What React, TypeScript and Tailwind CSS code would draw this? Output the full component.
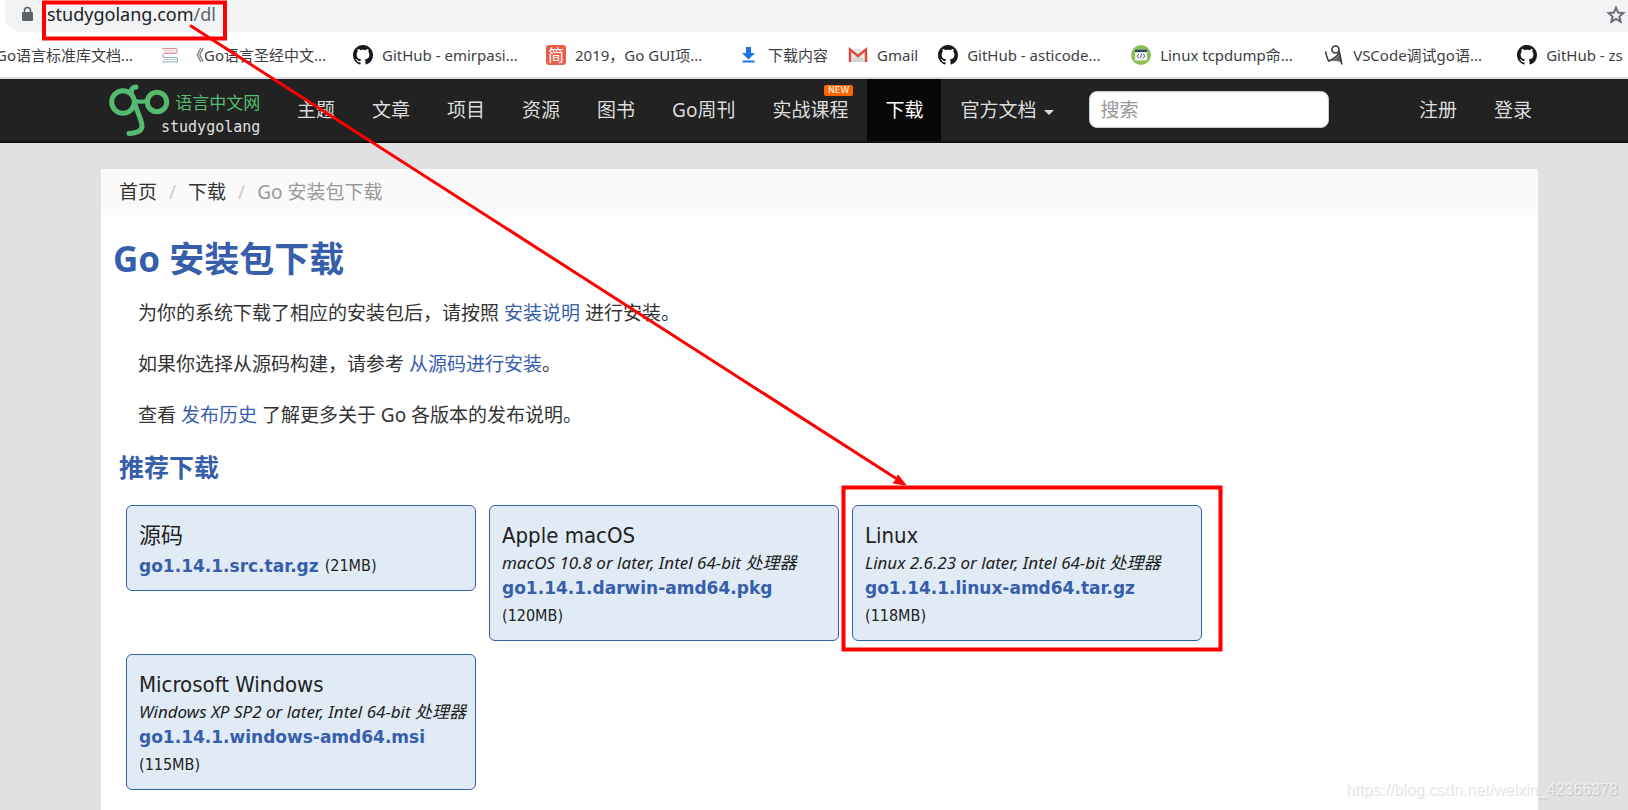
import type { ReactNode } from 'react';

interface Bookmark {
  title: string;
  icon: ReactNode;
  short?: boolean;
}

interface Download {
  platform: string;
  requirements?: string;
  file: string;
  size: string;
}

const GithubIcon = () => (
  <svg viewBox="0 0 16 16" className="size-5" fill="#191717">
    <path d="M8 0C3.58 0 0 3.58 0 8c0 3.54 2.29 6.53 5.47 7.59.4.07.55-.17.55-.38 0-.19-.01-.82-.01-1.49-2.01.37-2.53-.49-2.69-.94-.09-.23-.48-.94-.82-1.13-.28-.15-.68-.52-.01-.53.63-.01 1.08.58 1.23.82.72 1.21 1.87.87 2.33.66.07-.52.28-.87.51-1.07-1.78-.2-3.64-.89-3.64-3.95 0-.87.31-1.59.82-2.15-.08-.2-.36-1.02.08-2.12 0 0 .67-.21 2.2.82.64-.18 1.32-.27 2-.27.68 0 1.36.09 2 .27 1.53-1.04 2.2-.82 2.2-.82.44 1.1.16 1.92.08 2.12.51.56.82 1.27.82 2.15 0 3.07-1.87 3.75-3.65 3.95.29.25.54.73.54 1.48 0 1.07-.01 1.93-.01 2.2 0 .21.15.46.55.38A8.013 8.013 0 0016 8c0-4.42-3.58-8-8-8z" />
  </svg>
);

const BookIcon = () => (
  <svg viewBox="0 0 20 20" className="size-5" fill="none" strokeWidth="1.2">
    <path d="M2 3.500h14c1.500 0 1.500 4.500 0 4.500H4.500" stroke="#e88a8f" />
    <path d="M3 5.700h12" stroke="#f3c8ca" />
    <path d="M16 8.500H5c-3 0-3 4 0 4h11" stroke="#d8a0a8" />
    <path d="M3 14.600h13" stroke="#b9cfd2" />
    <path d="M5 12.500h11c2 0 2 4.500 0 4.500H2" stroke="#8fb3b8" />
  </svg>
);

const JianshuIcon = () => (
  <span className="flex size-5 items-center justify-center rounded-[3px] bg-[#e8604c] text-base leading-5 text-white">
    简
  </span>
);

const DownloadIcon = () => (
  <svg viewBox="0 0 20 20" className="size-5" fill="#1a73e8">
    <path d="M7 2h5v6h4l-6.500 6.500L3 8h4zM3.500 15.500h12v2h-12z" />
  </svg>
);

const GmailIcon = () => (
  <svg viewBox="0 0 20 20" className="size-5">
    <path d="M2 4h16v13H2z" fill="#e9e9e9" />
    <path d="M2 17l6-6 2 1.500 2-1.500 6 6z" fill="#d5d5d5" />
    <path d="M2 17V4.500l8 6.500 8-6.500V17" fill="none" stroke="#d9493d" strokeWidth="2.400" />
  </svg>
);

const CodeIcon = () => (
  <svg viewBox="0 0 20 20" className="size-5">
    <circle cx="10" cy="10" r="10" fill="#8cc152" />
    <path d="M4 4.500h12v11H4z" fill="#eef1f3" />
    <path d="M4 4.500h12v2.500H4z" fill="#2f4a63" />
    <path d="M8 9l-2 2 2 2M12 9l2 2-2 2M10.700 8.700l-1.400 4.600" fill="none" stroke="#5d7387" strokeWidth="1" />
  </svg>
);

const FigureIcon = () => (
  <svg viewBox="0 0 20 20" className="size-5" fill="none" stroke="#333">
    <circle cx="11.500" cy="4.500" r="3.500" strokeWidth="1.600" />
    <path d="M1.500 6.500c1 5 2 7.500 3 9.500 4-1 8-4 11-8.500 1 4 1.500 7 2.500 12" strokeWidth="1.400" />
    <path d="M4.500 16.500c5-.5 9-1.500 13 1.500l-2-9c-2 3-5 6-8 7z" fill="#333" stroke="none" opacity=".75" />
  </svg>
);

const bookmarks: Bookmark[] = [
  { title: 'Go语言标准库文档...', icon: <BookIcon /> },
  { title: '《Go语言圣经中文...', icon: <BookIcon /> },
  { title: 'GitHub - emirpasi...', icon: <GithubIcon /> },
  { title: '2019，Go GUI项...', icon: <JianshuIcon /> },
  { title: '下载内容', icon: <DownloadIcon />, short: true },
  { title: 'Gmail', icon: <GmailIcon />, short: true },
  { title: 'GitHub - asticode...', icon: <GithubIcon /> },
  { title: 'Linux tcpdump命...', icon: <CodeIcon /> },
  { title: 'VSCode调试go语...', icon: <FigureIcon /> },
  { title: 'GitHub - zs', icon: <GithubIcon />, short: true },
];

const navItems = ['主题', '文章', '项目', '资源', '图书', 'Go周刊', '实战课程', '下载', '官方文档'];

const downloads: Download[] = [
  { platform: '源码', file: 'go1.14.1.src.tar.gz', size: '21MB' },
  {
    platform: 'Apple macOS',
    requirements: 'macOS 10.8 or later, Intel 64-bit 处理器',
    file: 'go1.14.1.darwin-amd64.pkg',
    size: '120MB',
  },
  {
    platform: 'Linux',
    requirements: 'Linux 2.6.23 or later, Intel 64-bit 处理器',
    file: 'go1.14.1.linux-amd64.tar.gz',
    size: '118MB',
  },
  {
    platform: 'Microsoft Windows',
    requirements: 'Windows XP SP2 or later, Intel 64-bit 处理器',
    file: 'go1.14.1.windows-amd64.msi',
    size: '115MB',
  },
];

function BrowserBar() {
  return (
    <div className="bg-white">
      <div className="ml-[5px] flex h-8 items-center justify-between rounded-bl-2xl bg-[#f1f3f4] pr-px pl-4">
        <div className="flex items-center gap-[13px] pb-1">
          <svg viewBox="0 0 13 16" className="h-4 w-[13px]">
            <rect x="1" y="6" width="11" height="9" rx="1" fill="#5f6368" />
            <path d="M3.500 7V4.500a3 3 0 0 1 6 0V7" fill="none" stroke="#5f6368" strokeWidth="1.600" />
          </svg>
          <span className="text-lg leading-7 text-[#5f6368]">
            <span className="text-[#202124]">studygolang.com</span>/dl
          </span>
        </div>
        <button type="button" aria-label="收藏" className="pb-[2px]">
          <svg viewBox="0 0 24 24" className="size-[22px]" fill="#5f6368" stroke="#5f6368" strokeWidth=".5">
            <path d="M22 9.240l-7.190-.62L12 2 9.190 8.630 2 9.240l5.460 4.730L5.820 21 12 17.270 18.180 21l-1.630-7.030L22 9.240zM12 15.400l-3.760 2.270 1-4.280-3.320-2.880 4.380-.38L12 6.100l1.710 4.040 4.380.38-3.320 2.880 1 4.280L12 15.400z" />
          </svg>
        </button>
      </div>
      <div className="h-[47px] overflow-hidden border-b-2 border-[#dcdce0]">
        <div className="-ml-[33px] flex h-[46px] items-center gap-5">
          {bookmarks.map((item) => (
            <a key={item.title} href="#" className="flex shrink-0 items-center gap-[9px] text-[15px] leading-5 text-[#3c4043]">
              {item.icon}
              <span className={item.short ? 'whitespace-nowrap' : 'w-36 whitespace-nowrap'}>{item.title}</span>
            </a>
          ))}
        </div>
      </div>
    </div>
  );
}

function Logo() {
  return (
    <a href="#" className="flex w-[152px] shrink-0 items-start">
      <svg viewBox="0 0 62 54" className="h-[54px] w-[62px] shrink-0" fill="none" stroke="#55bb71" strokeWidth="5" strokeLinecap="round">
        <circle cx="14" cy="19" r="11.300" />
        <circle cx="48" cy="19" r="9.700" />
        <path d="M22.500 9c-.5-3 1-4.500 4.500-5" />
        <path d="M26 18c4 1 8 1 12 0" strokeWidth="4" />
        <path d="M25.500 19c2 9 7.500 18 7.500 24 0 5-5 7-13 7.500" />
      </svg>
      <span className="-ml-[10px] flex flex-col items-end pt-2">
        <span className="text-[17px] leading-6 whitespace-nowrap text-[#55bb71]">语言中文网</span>
        <span className="font-['DejaVu_Sans_Mono',monospace] text-[15px] leading-6 text-[#e0e0e0]">studygolang</span>
      </span>
    </a>
  );
}

function Navbar() {
  return (
    <header className="flex h-16 items-start border-b-2 border-[#101010] bg-[#222] pr-[90px] pl-[109px] text-[19px] text-[#ddd]">
      <div className="pt-1">
        <Logo />
      </div>
      <nav className="ml-[18px] flex gap-px">
        {navItems.map((item) => (
          <a
            key={item}
            href="#"
            className={
              item === '下载'
                ? 'flex h-[62px] items-center bg-[#080808] px-[18px] whitespace-nowrap text-white'
                : 'relative flex h-[62px] items-center px-[18px] whitespace-nowrap'
            }
          >
            {item}
            {item === '实战课程' && (
              <span className="absolute top-[6px] right-[13px] h-[11px] rounded-[2px] bg-[#f60] px-1 font-['DejaVu_Sans',sans-serif] text-[9px] leading-[11px] text-white">
                NEW
              </span>
            )}
            {item === '官方文档' && (
              <span className="mt-1 ml-2 border-x-[5px] border-t-[5px] border-x-transparent border-t-[#ddd]" />
            )}
          </a>
        ))}
      </nav>
      <form className="ml-[17px] pt-3">
        <input
          type="search"
          aria-label="搜索"
          placeholder="搜索"
          className="h-[37px] w-60 rounded-lg border border-[#ccc] bg-white px-[10px] text-[#333] inset-shadow-xs placeholder:text-[#999]"
        />
      </form>
      <div className="ml-auto flex h-[62px] items-center gap-[37px] pr-[6px]">
        <a href="#">注册</a>
        <a href="#">登录</a>
      </div>
    </header>
  );
}

function DownloadCard({ platform, requirements, file, size }: Download) {
  return (
    <div className="w-[350px] rounded-md border border-[#375eab] bg-[#e0ebf5] px-3 pt-[15px] pb-[9px] font-['DejaVu_Sans_Condensed','Noto_Sans_CJK_SC',sans-serif] text-[#222]">
      <h3 className="text-[22px] leading-[30px]">{platform}</h3>
      {requirements && (
        <p className="font-['Noto_Sans','Noto_Sans_CJK_SC',sans-serif] text-[17px] leading-6 whitespace-nowrap italic">
          {requirements}
        </p>
      )}
      <p className="flex flex-wrap items-center gap-x-[6px] text-base leading-[30px]">
        <a
          href="#"
          className={
            requirements
              ? "w-full font-['DejaVu_Sans',sans-serif] text-[17px] leading-[26px] font-bold text-[#375eab]"
              : "font-['DejaVu_Sans',sans-serif] text-[17px] font-bold text-[#375eab]"
          }
        >
          {file}
        </a>
        <span>({size})</span>
      </p>
    </div>
  );
}

// Red marks pointing from the address to the Linux package
function Annotations() {
  return (
    <svg className="pointer-events-none absolute top-0 left-0 h-[810px] w-[1628px]" fill="none" stroke="#f00">
      <rect x="44" y="2.500" width="181" height="36" strokeWidth="4" />
      <path d="M191 26L897 479" strokeWidth="3" strokeLinecap="round" />
      <path d="M906 485l-8-10-1 4-4 4z" fill="#f00" strokeWidth="1" />
      <rect x="843.500" y="487.500" width="377" height="162" strokeWidth="4" />
    </svg>
  );
}

export default function App() {
  return (
    <div className="relative min-h-screen overflow-hidden bg-[#e1e1e1] font-['Noto_Sans','Noto_Sans_CJK_SC',sans-serif]">
      <BrowserBar />
      <Navbar />
      <main className="mt-[26px] mr-[90px] ml-[101px] min-h-[641px] bg-white text-[19px] text-[#333]">
        <ol className="flex h-[46px] items-center bg-[#fafafa] pl-[18px]">
          <li>
            <a href="#">首页</a>
            <span className="px-3 text-[#ccc]">/</span>
          </li>
          <li>
            <a href="#">下载</a>
            <span className="px-3 text-[#ccc]">/</span>
          </li>
          <li className="text-[#999]">Go 安装包下载</li>
        </ol>
        <h1 className="px-3 pt-5 text-[35px] leading-[48px] font-bold text-[#375eab]">Go 安装包下载</h1>
        <div className="flex flex-col gap-[23px] px-[37px] pt-4 leading-7">
          <p>
            为你的系统下载了相应的安装包后，请按照{' '}
            <a href="#" className="text-[#375eab]">安装说明</a> 进行安装。
          </p>
          <p>
            如果你选择从源码构建，请参考{' '}
            <a href="#" className="text-[#375eab]">从源码进行安装</a>。
          </p>
          <p>
            查看 <a href="#" className="text-[#375eab]">发布历史</a> 了解更多关于 Go 各版本的发布说明。
          </p>
        </div>
        <h2 className="px-[18px] pt-5 text-[25px] leading-9 font-bold text-[#375eab]">推荐下载</h2>
        <div className="flex max-w-[1140px] flex-wrap items-start gap-[13px] px-[25px] pt-5 pb-5">
          {downloads.map((item) => (
            <DownloadCard key={item.file} {...item} />
          ))}
        </div>
      </main>
      <p className="absolute right-[10px] bottom-2 font-['Liberation_Sans',sans-serif] text-base leading-6 text-white/60 [text-shadow:1px_1px_1px_rgba(0,0,0,0.15)]">
        https://blog.csdn.net/weixin_42366378
      </p>
      <Annotations />
    </div>
  );
}
